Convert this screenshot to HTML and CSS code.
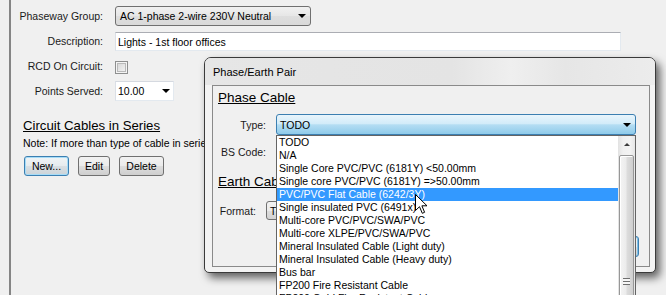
FILE: index.html
```html
<!DOCTYPE html>
<html>
<head>
<meta charset="utf-8">
<link rel="stylesheet" href="styles.css">
</head>
<body>
<div class="panel">
  <div class="form">
    <label class="lbl">Phaseway Group:</label>
    <div class="combo combo-group">AC 1-phase 2-wire 230V Neutral<span class="arrow"></span></div>
    <label class="lbl">Description:</label>
    <div class="textbox">Lights - 1st floor offices</div>
    <label class="lbl">RCD On Circuit:</label>
    <div class="check-cell"><span class="checkbox"></span></div>
    <label class="lbl">Points Served:</label>
    <div class="combo combo-edit">10.00<span class="arrow"></span></div>
  </div>
  <h2 class="section">Circuit Cables in Series</h2>
  <p class="note">Note: If more than type of cable in series, add each one in the order it is installed.</p>
  <div class="buttons">
    <button class="btn btn-default w-new">New...</button>
    <button class="btn w-edit">Edit</button>
    <button class="btn w-del">Delete</button>
  </div>
</div>

<div class="dialog">
  <div class="titlebar">Phase/Earth Pair</div>
  <div class="client">
    <h3 class="group">Phase Cable</h3>
    <div class="drow drow-type">
      <label class="lbl">Type:</label>
      <div class="combo combo-hot">TODO<span class="arrow"></span></div>
    </div>
    <div class="drow drow-bs">
      <label class="lbl">BS Code:</label>
      <div class="combo combo-plain"><span class="arrow"></span></div>
    </div>
    <h3 class="group group-earth">Earth Cable</h3>
    <div class="drow drow-format">
      <label class="lbl">Format:</label>
      <div class="combo combo-format">TODO<span class="arrow"></span></div>
    </div>
    <div class="dlg-buttons">
      <button class="btn btn-focus w-dlg">Cancel</button>
    </div>
  </div>

  <div class="droplist">
    <ul class="items">
      <li>TODO</li>
      <li>N/A</li>
      <li>Single Core PVC/PVC (6181Y) &lt;50.00mm</li>
      <li>Single core PVC/PVC (6181Y) =&gt;50.00mm</li>
      <li class="sel">PVC/PVC Flat Cable (6242/3Y)</li>
      <li>Single insulated PVC (6491x)</li>
      <li>Multi-core PVC/PVC/SWA/PVC</li>
      <li>Multi-core XLPE/PVC/SWA/PVC</li>
      <li>Mineral Insulated Cable (Light duty)</li>
      <li>Mineral Insulated Cable (Heavy duty)</li>
      <li>Bus bar</li>
      <li>FP200 Fire Resistant Cable</li>
      <li>FP200 Gold Fire Resistant Cable</li>
    </ul>
    <div class="vscroll">
      <div class="sb-up"><span class="up-arrow"></span></div>
      <div class="sb-thumb"><span class="grip"></span></div>
    </div>
  </div>
</div>

<svg class="cursor" width="13" height="21" viewBox="0 0 13 21">
  <path d="M0.5 0.5 L0.5 16.5 L4.5 12.7 L7.3 19.3 L9.6 18.3 L6.9 11.8 L12 11.8 Z" fill="#fff" stroke="#000" stroke-width="1" stroke-linejoin="miter"/>
</svg>
</body>
</html>
```

FILE: styles.css
```css
html, body {
  margin: 0;
  padding: 0;
}
body {
  background: #f0f0f0;
  font-family: "Liberation Sans", Arial, sans-serif;
  font-size: 10.5px;
  color: #000;
  width: 666px;
  height: 295px;
  overflow: hidden;
  position: relative;
}

/* ---------- main panel ---------- */
.panel {
  margin-left: 9px;
  border-left: 2px solid #858585;
  height: 295px;
  box-sizing: border-box;
}
.form {
  display: grid;
  grid-template-columns: 92px auto;
  grid-auto-rows: 20px;
  column-gap: 12px;
  row-gap: 5px;
  padding-top: 6px;
  align-items: center;
  justify-items: start;
}
.lbl {
  justify-self: end;
  white-space: nowrap;
  color: #1a1a1a;
}
.combo {
  position: relative;
  box-sizing: border-box;
  height: 20px;
  display: flex;
  align-items: center;
  white-space: nowrap;
  overflow: hidden;
}
.arrow {
  position: absolute;
  top: 50%;
  right: 4px;
  margin-top: -2px;
  width: 0;
  height: 0;
  border-left: 4px solid transparent;
  border-right: 4px solid transparent;
  border-top: 4px solid #000;
}
.combo-group {
  width: 196px;
  padding-left: 4px;
  border: 1px solid #707070;
  border-radius: 3px;
  background: linear-gradient(#f1f1f1, #e6e6e6 50%, #dedede 52%, #d9d9d9);
}
.textbox {
  width: 506px;
  height: 19px;
  box-sizing: border-box;
  padding-left: 2px;
  display: flex;
  align-items: center;
  background: #fff;
  border: 1px solid;
  border-color: #abadb3 #e3e9ef #e3e9ef #dbdfe6;
  margin-top: 1px;
}
.check-cell {
  display: flex;
  align-items: center;
  margin-top: 3px;
}
.checkbox {
  width: 13px;
  height: 13px;
  box-sizing: border-box;
  border: 1px solid #8e8f8f;
  box-shadow: inset 0 0 0 1px #f4f4f4, inset 0 0 0 2px #b9b9b9;
  background: linear-gradient(135deg, #d3d3d3, #f7f7f7);
}
.combo-edit {
  width: 59px;
  padding-left: 2px;
  background: #fff;
  border: 1px solid;
  border-color: #d5d9e0 #e3e9ef #e3e9ef #dbdfe6;
}
.combo-edit .arrow { right: 3px; }

.section {
  margin: 17px 0 0 12px;
  font-size: 13.2px;
  line-height: 16px;
  font-weight: normal;
  text-decoration: underline;
  white-space: nowrap;
}
.note {
  margin: 2px 0 0 12px;
  line-height: 14px;
  white-space: nowrap;
}
.buttons {
  display: flex;
  gap: 9px;
  margin: 6px 0 0 13px;
}
.btn {
  height: 20px;
  box-sizing: border-box;
  padding: 0;
  font-family: inherit;
  font-size: 10.5px;
  color: #000;
  border: 1px solid #707070;
  border-radius: 3px;
  background: linear-gradient(#f2f2f2, #ebebeb 50%, #dddddd 51%, #cfcfcf);
}
.btn-default {
  border-color: #3c7fb1;
  box-shadow: inset 0 0 0 1px #a6dcf7;
  background: linear-gradient(#f0f4f6, #e6ebee 50%, #d9dfe3 51%, #ccd3d8);
}
.w-new { width: 45px; }
.w-edit { width: 32px; }
.w-del { width: 45px; }

/* ---------- dialog ---------- */
.dialog {
  position: absolute;
  left: 204px;
  top: 57px;
  width: 452px;
  height: 216px;
  box-sizing: border-box;
  border: 1px solid #3a3a3a;
  border-radius: 7px 7px 5px 5px;
  background: #f3f3f3;
  box-shadow: 4px 5px 9px rgba(0, 0, 0, 0.6);
  display: flex;
  flex-direction: column;
}
.titlebar {
  height: 27px;
  flex: none;
  padding-left: 8px;
  display: flex;
  align-items: center;
  font-size: 11px;
  border-radius: 6px 6px 0 0;
  background: linear-gradient(90deg, #e6e6e6 0%, #e4e4e4 55%, #efefef 68%, #e6e6e6 80%, #ececec 100%);
}
.client {
  flex: 1;
  margin: 0 5px 5px 7px;
  border: 1px solid #8a8a8a;
  background: #f0f0f0;
  display: flex;
  flex-direction: column;
}
.group {
  margin: 4px 0 0 5px;
  font-size: 13.5px;
  line-height: 16px;
  font-weight: normal;
  text-decoration: underline;
  white-space: nowrap;
}
.group-earth { margin-top: 12px; }
.drow {
  display: grid;
  grid-template-columns: 53px 360px;
  column-gap: 10px;
  align-items: center;
}
.drow-type { margin-top: 8px; }
.drow-type .combo { height: 21px; }
.drow-bs { margin-top: 7px; }
.drow-format {
  margin-top: 11px;
  grid-template-columns: 43px 200px;
}
.combo-hot {
  padding-left: 3px;
  border: 1px solid #3c7fb1;
  border-radius: 3px;
  background: linear-gradient(#e9f5fc, #d3ecf9 45%, #b4ddf3 52%, #8fcbea);
}
.combo-plain {
  border: 1px solid #707070;
  border-radius: 3px;
  background: linear-gradient(#f2f2f2, #dddddd);
}
.combo-format {
  height: 19px;
  padding-left: 3px;
  border: 1px solid #707070;
  border-radius: 3px;
  background: linear-gradient(#f2f2f2, #ebebeb 50%, #dddddd 51%, #d3d3d3);
}
.dlg-buttons {
  display: flex;
  justify-content: flex-end;
  margin-top: 16px;
  padding-right: 10px;
}
.btn-focus {
  height: 21px;
  border-color: #3c7fb1;
  box-shadow: inset 0 0 0 1px #7fc0e6;
}
.w-dlg { width: 75px; }

/* ---------- open drop-down list ---------- */
.droplist {
  position: absolute;
  left: 71px;
  top: 77px;
  width: 360px;
  height: 166px;
  box-sizing: border-box;
  border: 1px solid #646464;
  background: #fff;
  display: flex;
  overflow: hidden;
}
.items {
  flex: 1;
  list-style: none;
  margin: 0;
  padding: 0;
}
.items li {
  line-height: 13px;
  height: 13px;
  padding-left: 2px;
  white-space: nowrap;
}
.items li.sel {
  background: #3399ff;
  color: #fff;
}
.vscroll {
  width: 17px;
  flex: none;
  display: flex;
  flex-direction: column;
  background: linear-gradient(90deg, #e2e2e2, #f0f0f0 30%, #f3f3f3 70%, #e6e6e6);
}
.sb-up {
  height: 16px;
  flex: none;
  display: flex;
  align-items: center;
  justify-content: center;
}
.up-arrow {
  width: 0;
  height: 0;
  border-left: 3px solid transparent;
  border-right: 3px solid transparent;
  border-bottom: 3px solid #3b3b3b;
}
.sb-thumb {
  flex: 1;
  margin: 3px 1px 0 1px;
  border: 1px solid #979797;
  border-radius: 2px;
  box-shadow: inset 1px 1px 0 #fff;
  background: linear-gradient(90deg, #f4f4f4, #ececec 45%, #dcdcdc 55%, #cfcfcf);
  display: flex;
  justify-content: center;
  padding-top: 122px;
}
.grip {
  width: 7px;
  height: 7px;
  background: repeating-linear-gradient(#6f6f6f 0 1px, #f6f6f6 1px 3px);
}

.cursor {
  position: absolute;
  left: 415px;
  top: 194px;
}
```
